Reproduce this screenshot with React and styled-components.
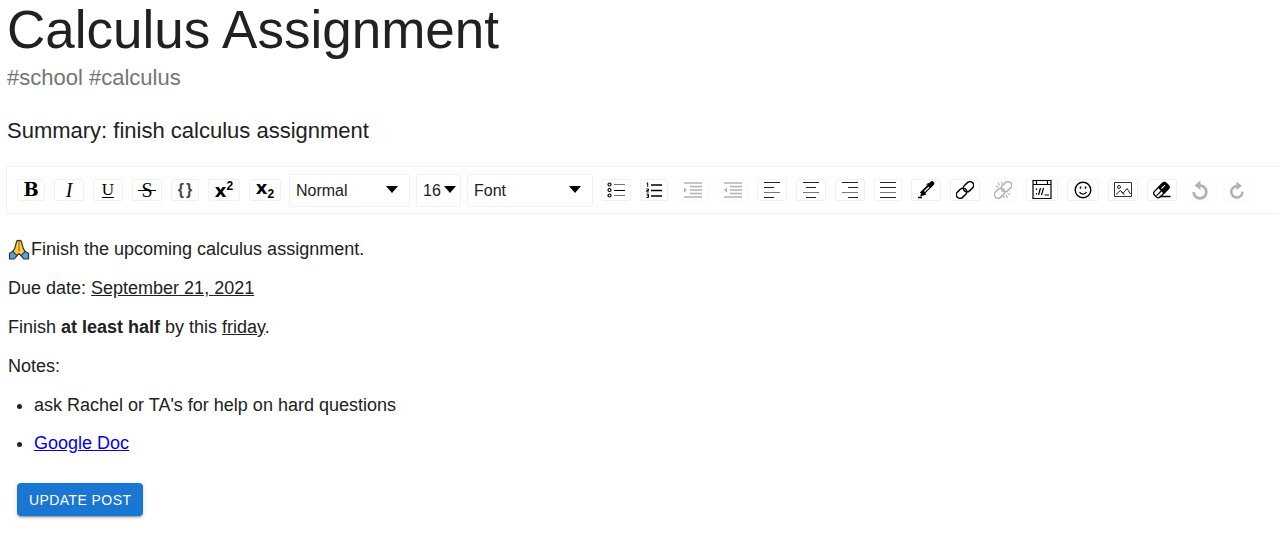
import React from "react";
import styled, { createGlobalStyle, css } from "styled-components";

const GlobalStyle = createGlobalStyle`
  *, *::before, *::after { box-sizing: border-box; }
  body {
    margin: 0;
    background: #fff;
    color: #212121;
    font-family: "Liberation Sans", Arial, Helvetica, sans-serif;
  }
`;

const Page = styled.main`
  padding: 0 0 22px 6px;
`;

const Header = styled.header`
  padding-left: 1px;
`;

const Title = styled.h1`
  margin: 0;
  font-size: 53px;
  line-height: 60px;
  font-weight: 400;
`;

const Tags = styled.p`
  margin: 0;
  font-size: 22px;
  line-height: 35px;
  color: #757575;
`;

const Summary = styled.h2`
  margin: 18px 0;
  font-size: 22px;
  line-height: 35px;
  font-weight: 400;
`;

const Toolbar = styled.div`
  display: flex;
  align-items: center;
  gap: 8px;
  height: 48px;
  padding-left: 10px;
  border: 1px solid #f1f1f1;
  border-right: 0;
  border-radius: 2px 0 0 2px;
  overflow: hidden;
`;

const Group = styled.div`
  display: flex;
  flex: none;
  align-items: center;
  gap: ${(p) => p.$gap || 9}px;
`;

const Tool = styled.button`
  display: flex;
  flex: none;
  align-items: center;
  justify-content: center;
  width: ${(p) => p.$w || 30}px;
  height: 22px;
  padding: 0;
  border: 1px solid #f1f1f1;
  border-radius: 2px;
  background: #fff;
  color: #000;
  cursor: pointer;
  &:disabled {
    opacity: 0.3;
    cursor: default;
  }
  svg {
    display: block;
    flex: none;
  }
`;

const Glyph = styled.span`
  position: relative;
  font-family: "DejaVu Serif", "Liberation Serif", serif;
  font-size: 18px;
  line-height: 20px;
  ${(p) => p.$kind === "bold" && css`font-weight: 700;`}
  ${(p) =>
    p.$kind === "italic" &&
    css`
      font-family: "Liberation Serif", serif;
      font-size: 20px;
      font-style: italic;
    `}
  ${(p) =>
    p.$kind === "underline" &&
    css`
      font-family: "Liberation Serif", serif;
      font-size: 17px;
      line-height: 14px;
      border-bottom: 1px solid #000;
    `}
  ${(p) =>
    p.$kind === "strike" &&
    css`
      font-family: "Liberation Serif", serif;
      font-size: 20px;
      &::after {
        content: "";
        position: absolute;
        left: -3px;
        right: -3px;
        top: 10px;
        height: 1px;
        background: #000;
      }
    `}
  ${(p) =>
    p.$kind === "code" &&
    css`
      font-family: "Liberation Sans", sans-serif;
      font-size: 16px;
      font-weight: 700;
      color: #444;
      display: flex;
      gap: 2px;
    `}
`;

const Script = styled.span`
  display: flex;
  align-items: ${(p) => (p.$sup ? "flex-start" : "flex-end")};
  height: 18px;
  font-family: "Liberation Sans", sans-serif;
  font-weight: 700;
  line-height: ${(p) => (p.$sup ? 20 : 14)}px;
  b {
    align-self: flex-start;
    font-family: "DejaVu Sans", sans-serif;
    font-size: 18px;
  }
  small {
    font-size: 12px;
    line-height: 10px;
  }
`;

const Picker = styled.div`
  position: relative;
  width: ${(p) => p.$w}px;
  height: 33px;
  &::after {
    content: "";
    position: absolute;
    top: 12px;
    right: ${(p) => (p.$tight ? 5 : 12)}px;
    border: 6px solid transparent;
    border-top: 7px solid #000;
    border-bottom: 0;
    pointer-events: none;
  }
`;

const Select = styled.select`
  appearance: none;
  width: 100%;
  height: 100%;
  padding: 0 6px;
  border: 1px solid #f1f1f1;
  border-radius: 2px;
  background: #fff;
  color: #212121;
  font-family: inherit;
  font-size: 16px;
`;

const Content = styled.article`
  padding: 25px 0 0 2px;
  font-size: 18px;
  line-height: 21px;
`;

const Paragraph = styled.p`
  margin: 0 0 18px;
`;

const Emoji = styled.svg`
  width: 22px;
  height: 21px;
  margin-right: 1px;
  vertical-align: top;
`;

const Notes = styled.ul`
  display: flex;
  flex-direction: column;
  gap: 17px;
  margin: 0 0 29px;
  padding-left: 26px;
`;

const DocLink = styled.a`
  color: #0000ee;
`;

const UpdateButton = styled.button`
  margin-left: 11px;
  height: 33px;
  padding: 0 12px;
  border: 0;
  border-radius: 4px;
  background: #1976d2;
  color: #fff;
  font-family: inherit;
  font-size: 14px;
  letter-spacing: 0.03em;
  text-transform: uppercase;
  box-shadow: 0 3px 1px -2px rgba(0, 0, 0, 0.2), 0 2px 2px rgba(0, 0, 0, 0.14),
    0 1px 5px rgba(0, 0, 0, 0.12);
  cursor: pointer;
`;

const Icon = ({ w = 18, h = 18, children }) => (
  <svg width={w} height={h} viewBox={`0 0 ${w} ${h}`} fill="none" stroke="#000" aria-hidden="true">
    {children}
  </svg>
);

const BulletIcon = () => (
  <Icon>
    <g strokeWidth="1.2">
      <circle cx="2.5" cy="3.5" r="1.5" />
      <circle cx="2.5" cy="9" r="1.5" />
      <circle cx="2.5" cy="14.5" r="1.5" />
    </g>
    <path d="M7 3.5h11M7 14.5h11" stroke="#777" />
    <path d="M7 9.5h11" />
  </Icon>
);

const NumberIcon = () => (
  <Icon w={16}>
    <path d="M5 4h11M5 9.5h11M5 15h11" strokeWidth="1.6" />
    <path d="M.7 2.5l1-.7v4M.5 8h2v1.5H.8V11h2M.5 13.2h2v3.3h-2M1 14.8h1.5" strokeWidth="1" />
  </Icon>
);

const IndentIcon = ({ out }) => (
  <Icon>
    <path d="M0 2h18M0 16h18" strokeWidth="1.3" />
    <path d="M6 5.5h12M6 9h12M6 12.5h12" strokeWidth="1.3" />
    <path d={out ? "M3 6.5v5L0 9z" : "M0 6.5v5L3 9z"} fill="#000" stroke="none" />
  </Icon>
);

const alignPaths = {
  left: "M1 2.5h16M1 7.5h10M1 17.5h10",
  center: "M1 2.5h16M4 7.5h10M4 17.5h10",
  right: "M1 2.5h16M7 7.5h10M7 17.5h10",
  justify: "M1 2.5h16M1 7.5h16M1 17.5h16",
};

const AlignIcon = ({ kind }) => (
  <Icon h={20}>
    <path d={alignPaths[kind]} stroke="#222" />
    <path d="M1 12.5h16" stroke="#777" />
  </Icon>
);

const PencilIcon = () => (
  <Icon>
    <path d="M13 4.500l2-2" strokeWidth="4.500" strokeLinecap="round" />
    <path d="M9.500 3.500l4-1.500" strokeWidth="1.200" />
    <path d="M4.500 13L13 4.500" strokeWidth="4.500" />
    <path d="M5.500 9.500l4 4L3 15.500z" fill="#000" stroke="none" />
    <path d="M7.500 10.500L12 6" stroke="#fff" strokeWidth="1.200" />
    <path d="M1 16.500h4" strokeWidth="1.300" />
  </Icon>
);

const LinkIcon = ({ broken }) => (
  <Icon>
    <g transform="rotate(-43 9 9)" strokeWidth="1.5">
      <rect x="-1.500" y="5.300" width="11.500" height="7.400" rx="3.700" />
      <rect x="8" y="5.300" width="11.500" height="7.400" rx="3.700" />
    </g>
    {broken && <path d="M1.500 5l3 1M4 1.500l1.500 3M8 1v2.500M13.500 12.500l3 1M12 14l1.500 3M10 14.500V17" strokeWidth="1.200" />}
  </Icon>
);

const EmbedIcon = () => (
  <Icon w={20} h={20}>
    <path d="M1 .5h18v18H1zM1 4.500h18M4.500 1v3M15.500 1v3" strokeWidth="1.200" />
    <path d="M4.500 8.500v1.500M4.500 13v1.500M8.500 8L6.500 15M11.500 8L9.500 15M12.500 15h4.500" strokeWidth="1.200" />
  </Icon>
);

const SmileIcon = () => (
  <Icon>
    <circle cx="9" cy="9" r="7.800" strokeWidth="1.400" />
    <path d="M5.500 11c1.500 2.700 5.500 2.700 7 0" strokeWidth="1.200" />
    <path d="M6.500 5.500v2.300M11.500 5.500v2.300" strokeWidth="1.500" />
  </Icon>
);

const ImageIcon = () => (
  <Icon h={16}>
    <path d="M.5.500h17v14H.500z" stroke="#333" />
    <circle cx="5" cy="5" r="1.500" stroke="#222" />
    <path d="M2 12.500l4.500-4 2.500 3 4-5 3.500 5.500M7 9l2 2.500 1.500 1" stroke="#222" />
  </Icon>
);

const EraserIcon = () => (
  <Icon>
    <g transform="rotate(-45 8.500 9)">
      <rect x="0" y="5" width="16.500" height="8" rx="2.500" strokeWidth="1.300" />
      <path d="M8 5h6a2.500 2.500 0 0 1 2.500 2.500v3A2.500 2.500 0 0 1 14 13H8z" fill="#000" />
      <path d="M1 9.500h7" strokeWidth="1.200" />
      <path d="M9.500 8h5" stroke="#fff" strokeWidth="1" />
    </g>
    <path d="M6.500 15.500h11" strokeWidth="1.300" />
  </Icon>
);

const HistoryIcon = ({ redo }) => (
  <Icon h={20}>
    <g transform={redo ? "translate(17 1) scale(-.9 .9)" : undefined}>
      <path d="M9 5.700a6.300 6.300 0 1 1-6.300 6.300" strokeWidth="2.800" />
      <path d="M9.500 .5v9.500L3.500 5.500z" fill="#000" stroke="none" />
    </g>
  </Icon>
);

const PrayingHands = () => (
  <Emoji viewBox="0 0 22 22" role="img" aria-label="Folded hands">
    <path d="M10 1.500c-1.500 0-1.700 1-1.900 2.500L6.500 10 4 14l3 4.500 4-3 4 3 3-4.500-2.500-4L13.900 4c-.2-1.500-.4-2.500-1.900-2.500l-1 .5z" fill="#ffc83d" stroke="#333" strokeWidth="1.300" />
    <path d="M11 2v11" stroke="#a86d16" strokeWidth="1.200" />
    <path d="M4.500 13l4.500 4.500-3 3.500H1v-6z" fill="#4ba3e3" stroke="#333" strokeWidth="1.200" />
    <path d="M17.500 13l-4.500 4.500 3 3.500h5v-6z" fill="#4ba3e3" stroke="#333" strokeWidth="1.200" />
  </Emoji>
);

export default function App() {
  return (
    <>
      <GlobalStyle />
      <Page>
        <Header>
          <Title>Calculus Assignment</Title>
          <Tags>#school #calculus</Tags>
          <Summary>Summary: finish calculus assignment</Summary>
        </Header>

        <Toolbar role="toolbar" aria-label="Text formatting">
          <Group>
            <Tool $w={28} aria-label="Bold"><Glyph $kind="bold">B</Glyph></Tool>
            <Tool aria-label="Italic"><Glyph $kind="italic">I</Glyph></Tool>
            <Tool aria-label="Underline"><Glyph $kind="underline">U</Glyph></Tool>
            <Tool aria-label="Strikethrough"><Glyph $kind="strike">S</Glyph></Tool>
            <Tool $w={28} aria-label="Monospace">
              <Glyph $kind="code"><span>{"{"}</span><span>{"}"}</span></Glyph>
            </Tool>
            <Tool $w={32} aria-label="Superscript"><Script $sup><b>x</b><small>2</small></Script></Tool>
            <Tool $w={32} aria-label="Subscript"><Script><b>x</b><small>2</small></Script></Tool>
          </Group>
          <Group $gap={6}>
            <Picker $w={121}>
              <Select aria-label="Block type" defaultValue="Normal"><option>Normal</option></Select>
            </Picker>
            <Picker $w={45} $tight>
              <Select aria-label="Font size" defaultValue="16"><option>16</option></Select>
            </Picker>
            <Picker $w={126}>
              <Select aria-label="Font family" defaultValue="Font"><option>Font</option></Select>
            </Picker>
          </Group>
          <Group>
            <Tool aria-label="Bulleted list"><BulletIcon /></Tool>
            <Tool $w={28} aria-label="Numbered list"><NumberIcon /></Tool>
            <Tool $w={32} aria-label="Indent" disabled><IndentIcon /></Tool>
            <Tool aria-label="Outdent" disabled><IndentIcon out /></Tool>
            <Tool aria-label="Align left"><AlignIcon kind="left" /></Tool>
            <Tool aria-label="Align center"><AlignIcon kind="center" /></Tool>
            <Tool aria-label="Align right"><AlignIcon kind="right" /></Tool>
            <Tool $w={28} aria-label="Justify"><AlignIcon kind="justify" /></Tool>
            <Tool aria-label="Text color"><PencilIcon /></Tool>
            <Tool aria-label="Add link"><LinkIcon /></Tool>
            <Tool $w={28} aria-label="Remove link" disabled><LinkIcon broken /></Tool>
            <Tool $w={32} aria-label="Embed"><EmbedIcon /></Tool>
            <Tool $w={32} aria-label="Emoji"><SmileIcon /></Tool>
            <Tool aria-label="Image"><ImageIcon /></Tool>
            <Tool aria-label="Clear formatting"><EraserIcon /></Tool>
            <Tool $w={28} aria-label="Undo" disabled><HistoryIcon /></Tool>
            <Tool $w={28} aria-label="Redo" disabled><HistoryIcon redo /></Tool>
          </Group>
        </Toolbar>

        <Content>
          <Paragraph><PrayingHands />Finish the upcoming calculus assignment.</Paragraph>
          <Paragraph>Due date: <u>September 21, 2021</u></Paragraph>
          <Paragraph>Finish <strong>at least half</strong> by this <u>friday</u>.</Paragraph>
          <Paragraph>Notes:</Paragraph>
          <Notes>
            <li>ask Rachel or TA's for help on hard questions</li>
            <li><DocLink href="#google-doc">Google Doc</DocLink></li>
          </Notes>
        </Content>
        <UpdateButton type="button">Update Post</UpdateButton>
      </Page>
    </>
  );
}
